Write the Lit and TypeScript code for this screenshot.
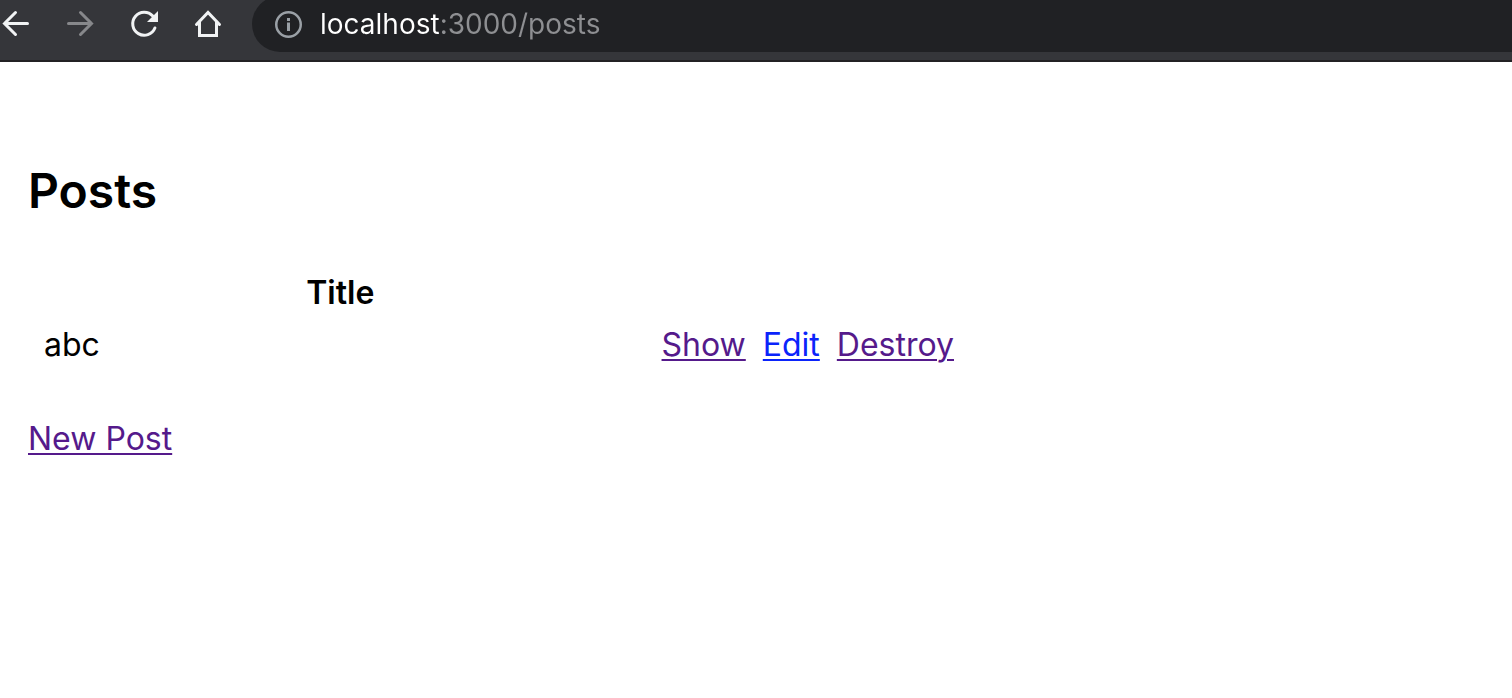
import { LitElement, html, css } from "lit";
import { customElement, property, state } from "lit/decorators.js";

@customElement("browser-bar")
class BrowserBar extends LitElement {
  @property() address = "";

  static styles = css`
    :host {
      display: flex;
      align-items: flex-start;
      box-sizing: border-box;
      height: 62px;
      background: #35363a;
      border-bottom: 2px solid #232124;
      overflow: hidden;
    }
    .nav {
      display: flex;
      flex: none;
      gap: 32px;
      padding-top: 8px;
      padding-right: 28px;
    }
    .tool {
      width: 32px;
      height: 32px;
      padding: 0;
      border: 0;
      background: none;
      color: #f1f3f4;
    }
    .tool:disabled {
      color: #87888b;
    }
    svg {
      display: block;
      flex: none;
      width: 32px;
      height: 32px;
      fill: none;
      stroke: currentColor;
      stroke-width: 3;
    }
    .omnibox {
      display: flex;
      flex: 1;
      min-width: 0;
      align-items: center;
      gap: 16px;
      box-sizing: border-box;
      height: 56px;
      margin-top: -4px;
      padding-left: 20px;
      border-radius: 28px 0 0 28px;
      background: #202124;
      color: #9aa0a6;
    }
    .url {
      flex: 1;
      min-width: 0;
      height: 40px;
      padding: 0;
      border: 0;
      outline: 0;
      font: 400 28px/40px Inter, sans-serif;
      color: #8e8f92;
      background: linear-gradient(to right, #ffffff 120px, #8e8f92 120px);
      background-clip: text;
      -webkit-background-clip: text;
      -webkit-text-fill-color: transparent;
    }
  `;

  render() {
    return html`
      <nav class="nav" aria-label="Browser controls">
        <button class="tool" aria-label="Back">
          <svg viewBox="0 0 32 32" stroke-linecap="round">
            <path d="M27.5 15.5H4.5M15.5 4.5L4.5 15.5L15.5 26.5" />
          </svg>
        </button>
        <button class="tool" aria-label="Forward" disabled>
          <svg viewBox="0 0 32 32" stroke-linecap="round">
            <path d="M4.5 15.5H27.5M16.5 4.5L27.5 15.5L16.5 26.5" />
          </svg>
        </button>
        <button class="tool" aria-label="Reload">
          <svg viewBox="0 0 32 32" stroke-linecap="round">
            <path d="M24.8 8.1A11.5 11.5 0 1 0 26.9 20" />
            <path d="M30 3V14H19Z" fill="currentColor" stroke="none" />
          </svg>
        </button>
        <button class="tool" aria-label="Home">
          <svg viewBox="0 0 32 32" stroke-linecap="round">
            <path d="M4.5 16.5L16 4.5L27.5 16.5" />
            <path d="M7.5 14V27.5H24.5V14" />
          </svg>
        </button>
      </nav>
      <div class="omnibox">
        <svg viewBox="0 0 32 32" aria-hidden="true">
          <circle cx="16.5" cy="16.5" r="12.25" stroke-width="2.5" />
          <path d="M16.5 14.5V23M16.5 10V13" />
        </svg>
        <input class="url" type="text" aria-label="Address" spellcheck="false" .value=${this.address} />
      </div>
    `;
  }
}

@customElement("app-root")
class AppRoot extends LitElement {
  @state() private posts = [{ id: 1, title: "abc" }];

  static styles = css`
    :host {
      display: block;
      min-height: 100vh;
      background: #ffffff;
      color: #000000;
      font: 400 32px/40px Inter, sans-serif;
    }
    main {
      padding: 97px 28px 32px;
    }
    h1 {
      margin: 0 0 50px;
      font-size: 48px;
      line-height: 64px;
      font-weight: 600;
    }
    table {
      width: 100%;
      max-width: 934px;
      margin-bottom: 54px;
      border-collapse: collapse;
    }
    th,
    td {
      padding: 0 0 12px;
      text-align: left;
    }
    .heading {
      width: 100%;
      font-weight: 600;
      text-align: center;
    }
    .title {
      padding: 0 16px;
    }
    .action {
      padding: 0 8px 0 9px;
      white-space: nowrap;
    }
    a {
      color: #551a8b;
      text-decoration: underline;
      text-decoration-thickness: 2px;
      text-underline-offset: 3px;
    }
    .fresh {
      color: #0b24fb;
    }
  `;

  render() {
    return html`
      <browser-bar address="localhost:3000/posts"></browser-bar>
      <main>
        <h1>Posts</h1>
        <table>
          <thead>
            <tr>
              <th class="heading" scope="col">Title</th>
              <td colspan="3"></td>
            </tr>
          </thead>
          <tbody>
            ${this.posts.map(
              (post) => html`
                <tr>
                  <td class="title">${post.title}</td>
                  <td class="action"><a href="#show-${post.id}">Show</a></td>
                  <td class="action"><a class="fresh" href="#edit-${post.id}">Edit</a></td>
                  <td class="action"><a href="#destroy-${post.id}">Destroy</a></td>
                </tr>
              `
            )}
          </tbody>
        </table>
        <a href="#new">New Post</a>
      </main>
    `;
  }
}
